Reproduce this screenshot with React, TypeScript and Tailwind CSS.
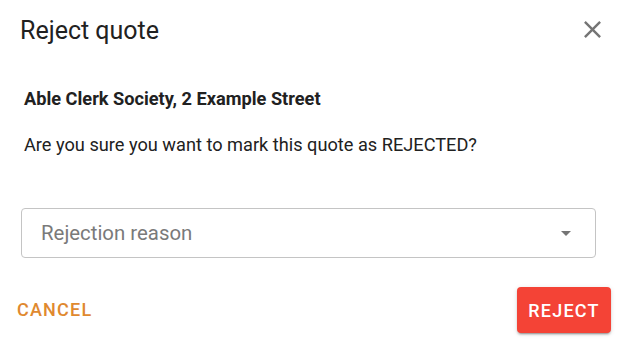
import React from "react";

export default function App() {
  return (
    <div
      className="w-[620px] h-[342px] bg-white text-[#212121] overflow-hidden"
      style={{ fontFamily: "Roboto, 'Liberation Sans', sans-serif" }}
    >
      <div className="flex items-start justify-between pt-[15px] pl-[20px] pr-[13px]">
        <h2 className="text-[25px] leading-[32px] font-normal">Reject quote</h2>
        <svg viewBox="0 0 24 24" className="w-[29px] h-[29px] fill-[#757575]">
          <path d="M19 6.41 17.59 5 12 10.59 6.41 5 5 6.41 10.59 12 5 17.59 6.41 19 12 13.41 17.59 19 19 17.59 13.41 12z" />
        </svg>
      </div>
      <div className="px-[24px] mt-[38px]">
        <p className="text-[18.2px] leading-[27px] font-bold">Able Clerk Society, 2 Example Street</p>
        <p className="text-[18.2px] leading-[27px] mt-[19px]">Are you sure you want to mark this quote as REJECTED?</p>
      </div>
      <div className="ml-[21px] mr-[24px] mt-[50px] h-[50px] border border-[#c4c4c4] rounded-[4px] flex items-center justify-between pl-[19px] pr-[17px]">
        <span className="text-[20.4px] leading-[24px] text-[#7a7a7a]">Rejection reason</span>
        <svg viewBox="0 0 24 24" className="w-[24px] h-[24px] fill-[#757575]">
          <path d="M7 10l5 5 5-5z" />
        </svg>
      </div>
      <div className="flex items-center justify-between mt-[29px] pl-[17px] pr-[9px]">
        <span className="text-[18px] leading-[24px] font-medium tracking-[1.2px] text-[#e0892f]">CANCEL</span>
        <button className="w-[94px] h-[46px] rounded-[4px] bg-[#f44336] text-white text-[18px] font-medium tracking-[1.2px] shadow-[0_3px_1px_-2px_rgba(0,0,0,0.2),0_2px_2px_0_rgba(0,0,0,0.14),0_1px_5px_0_rgba(0,0,0,0.12)]">
          REJECT
        </button>
      </div>
    </div>
  );
}
